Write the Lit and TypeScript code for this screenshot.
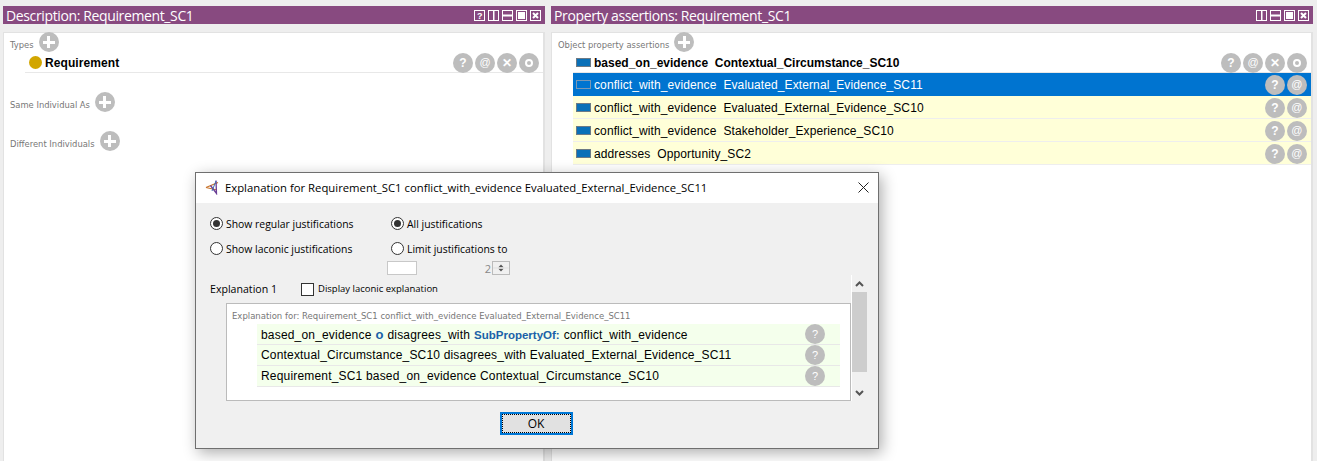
import { LitElement, html, css, svg } from "lit";
import { customElement } from "lit/decorators.js";

const winIcons: Record<string, unknown> = {
  help: svg`<rect x="0.5" y="0.5" width="10" height="10" fill="none" stroke="#fff"/><text x="5.5" y="9" font-size="9" font-weight="700" font-family="Liberation Sans" text-anchor="middle" fill="#fff">?</text>`,
  split: svg`<rect x="0.5" y="0.5" width="10" height="10" fill="none" stroke="#fff"/><rect x="5" y="0" width="1.5" height="11" fill="#fff"/>`,
  stack: svg`<rect x="0.5" y="0.5" width="10" height="10" fill="none" stroke="#fff"/><rect x="0" y="4.5" width="11" height="2" fill="#fff"/>`,
  max: svg`<rect x="0.5" y="0.5" width="10" height="10" fill="none" stroke="#fff"/><rect x="2" y="2" width="7" height="7" fill="#fff"/>`,
  close: svg`<rect x="0.5" y="0.5" width="10" height="10" fill="none" stroke="#fff"/><path d="M3 3l5 5M8 3l-5 5" stroke="#fff" stroke-width="2"/>`,
};

const winIcon = (name: string) =>
  html`<svg class="win-icon" width="11" height="11" viewBox="0 0 11 11">${winIcons[name]}</svg>`;

const btn = (glyph: string, light = false) =>
  html`<span class="btn ${light ? "light" : ""}">${glyph}</span>`;

const plus = () => html`<span class="btn plus"></span>`;

const ring = () => html`<span class="btn"><span class="ring"></span></span>`;

@customElement("app-root")
export class AppRoot extends LitElement {
  static styles = css`
    :host {
      display: block;
      position: relative;
      width: 1317px;
      height: 461px;
      overflow: hidden;
      background: #eeeeee;
      font-family: "Liberation Sans", Arial, sans-serif;
      color: #000;
    }
    .panels {
      display: grid;
      grid-template-columns: 542px 762px;
      column-gap: 6px;
      padding: 6px 0 0 3px;
      height: 455px;
      box-sizing: border-box;
    }
    .panel {
      display: flex;
      flex-direction: column;
      gap: 8px;
    }
    .bar {
      display: flex;
      align-items: center;
      justify-content: space-between;
      height: 18px;
      flex: none;
      background: #884a80;
      color: #fff;
      padding: 0 4px 0 3px;
      font-family: "Open Sans", sans-serif;
      font-size: 14px;
      letter-spacing: -0.37px;
      white-space: nowrap;
    }
    .win-icons {
      display: flex;
      gap: 3px;
    }
    .win-icon {
      display: block;
    }
    .body {
      flex: 1;
      background: #fff;
      border: 1px solid #e2e2e2;
      border-right-width: 2px;
      margin-bottom: -10px;
    }
    .section {
      display: flex;
      align-items: center;
      gap: 3px;
      height: 22px;
      padding-left: 6px;
      font-family: "DejaVu Sans", sans-serif;
      font-size: 8.4px;
      color: #777;
      white-space: nowrap;
    }
    .section.first {
      height: 20px;
      margin-top: -1px;
    }
    .section .label {
      padding-top: 5px;
    }
    .section.spaced-a {
      margin-top: 18px;
    }
    .section.spaced-b {
      margin-top: 17px;
    }
    .btn {
      display: inline-flex;
      align-items: center;
      justify-content: center;
      flex: none;
      width: 20px;
      height: 20px;
      margin: 0 1px;
      border-radius: 50%;
      background: #bdbdbd;
      color: #fff;
      font-size: 12px;
      font-weight: 700;
      font-family: "Liberation Sans", sans-serif;
      line-height: 1;
    }
    .btn.light {
      font-weight: 400;
      font-size: 11px;
    }
    .ring {
      width: 8px;
      height: 8px;
      box-sizing: border-box;
      border: 2px solid #fff;
      border-radius: 50%;
    }
    .plus {
      position: relative;
      margin-left: 2px;
    }
    .plus::before,
    .plus::after {
      content: "";
      position: absolute;
      background: #fff;
    }
    .plus::before {
      left: 4px;
      right: 4px;
      top: 8.5px;
      height: 3px;
    }
    .plus::after {
      top: 4px;
      bottom: 4px;
      left: 8.5px;
      width: 3px;
    }
    .type-row {
      display: flex;
      align-items: center;
      height: 20px;
      margin-left: 21px;
      padding-left: 4px;
      border-bottom: 1px solid #e8e8e8;
      font-size: 12px;
      font-weight: 700;
    }
    .type-row .name {
      padding: 2px 0 0 1px;
      letter-spacing: 0.08px;
    }
    .dot {
      width: 13px;
      height: 13px;
      border-radius: 50%;
      background: #d2a600;
      margin-right: 2px;
    }
    .spacer {
      flex: 1;
    }
    .buttons {
      display: flex;
      margin-right: 3px;
      margin-top: 1px;
    }
    .rows {
      display: flex;
      flex-direction: column;
    }
    .prop-row {
      display: flex;
      align-items: center;
      height: 22px;
      margin-left: 21px;
      padding-left: 3px;
      background: #ffffd8;
      border-bottom: 1px solid #eeeeee;
      font-size: 12px;
      letter-spacing: 0.11px;
      white-space: pre;
    }
    .prop-row .text {
      padding-top: 1px;
    }
    .prop-row.plain {
      background: #fff;
      font-weight: 700;
      height: 20px;
      letter-spacing: 0;
      border-bottom: 1px solid #e8e8e8;
    }
    .prop-row.sel {
      background: #0074d0;
      color: #fff;
      border-bottom-color: #0074d0;
    }
    .prop-icon {
      flex: none;
      width: 15px;
      height: 9px;
      margin-right: 3px;
      box-sizing: border-box;
      background: #0a70b8;
      border: 1px solid #6c7a86;
    }
    .sel .prop-icon {
      background: #0074d0;
      border-color: #7c98b4;
    }
    .dialog {
      position: absolute;
      left: 195px;
      top: 172px;
      width: 684px;
      height: 277px;
      box-sizing: border-box;
      display: flex;
      flex-direction: column;
      background: #f0f0f0;
      border: 1px solid #6f6f6f;
      box-shadow: 3px 4px 14px rgba(0, 0, 0, 0.32);
      font-family: "Open Sans", sans-serif;
      font-size: 10.4px;
    }
    .dlg-title {
      display: flex;
      align-items: center;
      flex: none;
      height: 30px;
      padding: 0 9px 2px 9px;
      box-sizing: border-box;
      background: #fff;
      font-size: 11.3px;
      white-space: nowrap;
    }
    .dlg-title svg.logo {
      margin-right: 4px;
    }
    .dlg-body {
      flex: 1;
      display: flex;
      flex-direction: column;
      padding: 8px 11px 0 14px;
    }
    .opts {
      display: grid;
      grid-template-columns: 181px 1fr;
      grid-auto-rows: 25px;
    }
    .opt {
      display: flex;
      align-items: center;
      gap: 3px;
      white-space: nowrap;
    }
    .radio {
      position: relative;
      flex: none;
      width: 13px;
      height: 13px;
      box-sizing: border-box;
      border: 1px solid #333;
      border-radius: 50%;
      background: #fff;
    }
    .radio.on::after {
      content: "";
      position: absolute;
      inset: 2px;
      border-radius: 50%;
      background: #333;
    }
    .spin-row {
      display: flex;
      align-items: center;
      height: 14px;
      margin: 0 0 0 177px;
    }
    .spin-input {
      width: 30px;
      height: 14px;
      box-sizing: border-box;
      background: #fff;
      border: 1px solid #c8c8c8;
    }
    .spin-val {
      width: 75px;
      text-align: right;
      color: #888;
      font-size: 11px;
      padding-right: 1px;
      box-sizing: border-box;
    }
    .spin-btn {
      width: 18px;
      height: 14px;
      box-sizing: border-box;
      border: 1px solid #bbb;
      display: block;
    }
    .exp {
      display: grid;
      grid-template-columns: 1fr 16px;
      column-gap: 0;
    }
    .exp-main {
      display: flex;
      flex-direction: column;
      min-width: 0;
    }
    .exp-head {
      display: flex;
      align-items: center;
      height: 28px;
      font-size: 10.6px;
      white-space: nowrap;
    }
    .exp-head .name {
      width: 91px;
    }
    .check {
      width: 13px;
      height: 13px;
      box-sizing: border-box;
      border: 1px solid #333;
      background: #fff;
      margin-right: 4px;
    }
    .check-label {
      font-size: 9.5px;
      padding-bottom: 1px;
    }
    .box {
      margin-left: 16px;
      width: 625px;
      height: 98px;
      box-sizing: border-box;
      background: #fff;
      border: 1px solid #bbbbbb;
      padding: 0 10px 0 30px;
    }
    .box-head {
      height: 20px;
      box-sizing: border-box;
      padding-bottom: 3px;
      display: flex;
      align-items: flex-end;
      margin-left: -25px;
      font-family: "DejaVu Sans", sans-serif;
      font-size: 8.5px;
      color: #777;
      white-space: nowrap;
    }
    .ax {
      display: flex;
      align-items: center;
      height: 20px;
      background: #f4ffec;
      border-bottom: 1px solid #e8e8e8;
      padding: 0 3px 0 4px;
      font-family: "Liberation Sans", sans-serif;
      font-size: 12px;
      letter-spacing: 0.18px;
      white-space: pre;
    }
    .kw {
      color: #1a62a8;
      font-weight: 700;
      font-size: 11.5px;
      letter-spacing: 0;
      margin: 0 0.5px;
    }
    .kw.op {
      font-size: 13px;
    }
    .ax .btn {
      margin-right: 12px;
      font-weight: 400;
      font-size: 11px;
      letter-spacing: 0;
    }
    .scroll {
      display: flex;
      flex-direction: column;
      height: 126px;
      box-sizing: border-box;
      border-left: 1px solid #fff;
    }
    .thumb {
      height: 80px;
      flex: none;
      background: #cdcdcd;
    }
    .arrow {
      display: block;
      flex: none;
    }
    .footer {
      display: flex;
      justify-content: center;
      padding-top: 11px;
      margin-left: -5px;
    }
    .ok {
      width: 73px;
      height: 23px;
      box-sizing: border-box;
      border: 2px solid #0078d7;
      background: #e1e1e1;
      display: flex;
      align-items: center;
      justify-content: center;
      outline: 1px dotted #000;
      outline-offset: -3px;
      font-size: 12px;
    }
  `;

  private propRow(prop: string, target: string, cls = "") {
    const plain = cls === "plain";
    return html`<div class="prop-row ${cls}">
      <span class="prop-icon"></span><span class="text">${prop}  ${target}</span>
      <span class="spacer"></span>
      <span class="buttons">
        ${btn("?")}${btn("@", true)}${plain ? html`${btn("✕")}${ring()}` : ""}
      </span>
    </div>`;
  }

  render() {
    return html`
      <div class="panels">
        <section class="panel">
          <div class="bar">
            <span>Description: Requirement_SC1</span>
            <span class="win-icons">
              ${winIcon("help")}${winIcon("split")}${winIcon("stack")}${winIcon("max")}${winIcon("close")}
            </span>
          </div>
          <div class="body">
            <div class="section first"><span class="label">Types</span>${plus()}</div>
            <div class="type-row">
              <span class="dot"></span><span class="name">Requirement</span>
              <span class="spacer"></span>
              <span class="buttons">${btn("?")}${btn("@", true)}${btn("✕")}${ring()}</span>
            </div>
            <div class="section spaced-a"><span class="label">Same Individual As</span>${plus()}</div>
            <div class="section spaced-b"><span class="label">Different Individuals</span>${plus()}</div>
          </div>
        </section>
        <section class="panel">
          <div class="bar">
            <span>Property assertions: Requirement_SC1</span>
            <span class="win-icons">
              ${winIcon("split")}${winIcon("stack")}${winIcon("max")}${winIcon("close")}
            </span>
          </div>
          <div class="body">
            <div class="section first"><span class="label">Object property assertions</span>${plus()}</div>
            <div class="rows">
              ${this.propRow("based_on_evidence", "Contextual_Circumstance_SC10", "plain")}
              ${this.propRow("conflict_with_evidence", "Evaluated_External_Evidence_SC11", "sel")}
              ${this.propRow("conflict_with_evidence", "Evaluated_External_Evidence_SC10")}
              ${this.propRow("conflict_with_evidence", "Stakeholder_Experience_SC10")}
              ${this.propRow("addresses", "Opportunity_SC2")}
            </div>
          </div>
        </section>
      </div>

      <div class="dialog">
        <div class="dlg-title">
          <svg class="logo" width="16" height="16" viewBox="0 0 16 16">
            <path d="M1 8.5L13 3.5" stroke="#c8742c" stroke-width="1.3" fill="none" />
            <path d="M1 8.5L12 11" stroke="#c8742c" stroke-width="1.2" fill="none" />
            <path d="M11 1.5L11.5 14.5L5.5 6.5" stroke="#6a3f96" stroke-width="1.3" fill="none" />
            <path d="M11 2L7 12" stroke="#3f6fb0" stroke-width="1" fill="none" />
          </svg>
          <span>Explanation for Requirement_SC1 conflict_with_evidence Evaluated_External_Evidence_SC11</span>
          <span class="spacer"></span>
          <svg width="11" height="11" viewBox="0 0 11 11">
            <path d="M0.5 0.5L10.5 10.5M10.5 0.5L0.5 10.5" stroke="#222" stroke-width="1" />
          </svg>
        </div>
        <div class="dlg-body">
          <div class="opts">
            <label class="opt"><span class="radio on"></span>Show regular justifications</label>
            <label class="opt"><span class="radio on"></span>All justifications</label>
            <label class="opt"><span class="radio"></span>Show laconic justifications</label>
            <label class="opt"><span class="radio"></span>Limit justifications to</label>
          </div>
          <div class="spin-row">
            <span class="spin-input"></span>
            <span class="spin-val">2</span>
            <svg class="spin-btn" viewBox="0 0 18 14">
              <path d="M6 6l3-3 3 3zM6 8l3 3 3-3z" fill="#555" />
              <line x1="0" y1="7" x2="18" y2="7" stroke="#ddd" />
            </svg>
          </div>
          <div class="exp">
            <div class="exp-main">
              <div class="exp-head">
                <span class="name">Explanation 1</span>
                <span class="check"></span>
                <span class="check-label">Display laconic explanation</span>
              </div>
              <div class="box">
                <div class="box-head">Explanation for: Requirement_SC1 conflict_with_evidence Evaluated_External_Evidence_SC11</div>
                <div class="ax"><span>based_on_evidence <span class="kw op">o</span> disagrees_with <span class="kw">SubPropertyOf:</span> conflict_with_evidence</span><span class="spacer"></span>${btn("?")}</div>
                <div class="ax"><span>Contextual_Circumstance_SC10 disagrees_with Evaluated_External_Evidence_SC11</span><span class="spacer"></span>${btn("?")}</div>
                <div class="ax"><span>Requirement_SC1 based_on_evidence Contextual_Circumstance_SC10</span><span class="spacer"></span>${btn("?")}</div>
              </div>
            </div>
            <div class="scroll">
              <svg class="arrow" width="15" height="17" viewBox="0 0 15 17">
                <path d="M4 11L7.5 7.5L11 11" fill="none" stroke="#555" stroke-width="2" />
              </svg>
              <div class="thumb"></div>
              <span class="spacer"></span>
              <svg class="arrow" width="15" height="17" viewBox="0 0 15 17">
                <path d="M4 7L7.5 10.5L11 7" fill="none" stroke="#555" stroke-width="2" />
              </svg>
            </div>
          </div>
          <div class="footer"><div class="ok">OK</div></div>
        </div>
      </div>
    `;
  }
}
